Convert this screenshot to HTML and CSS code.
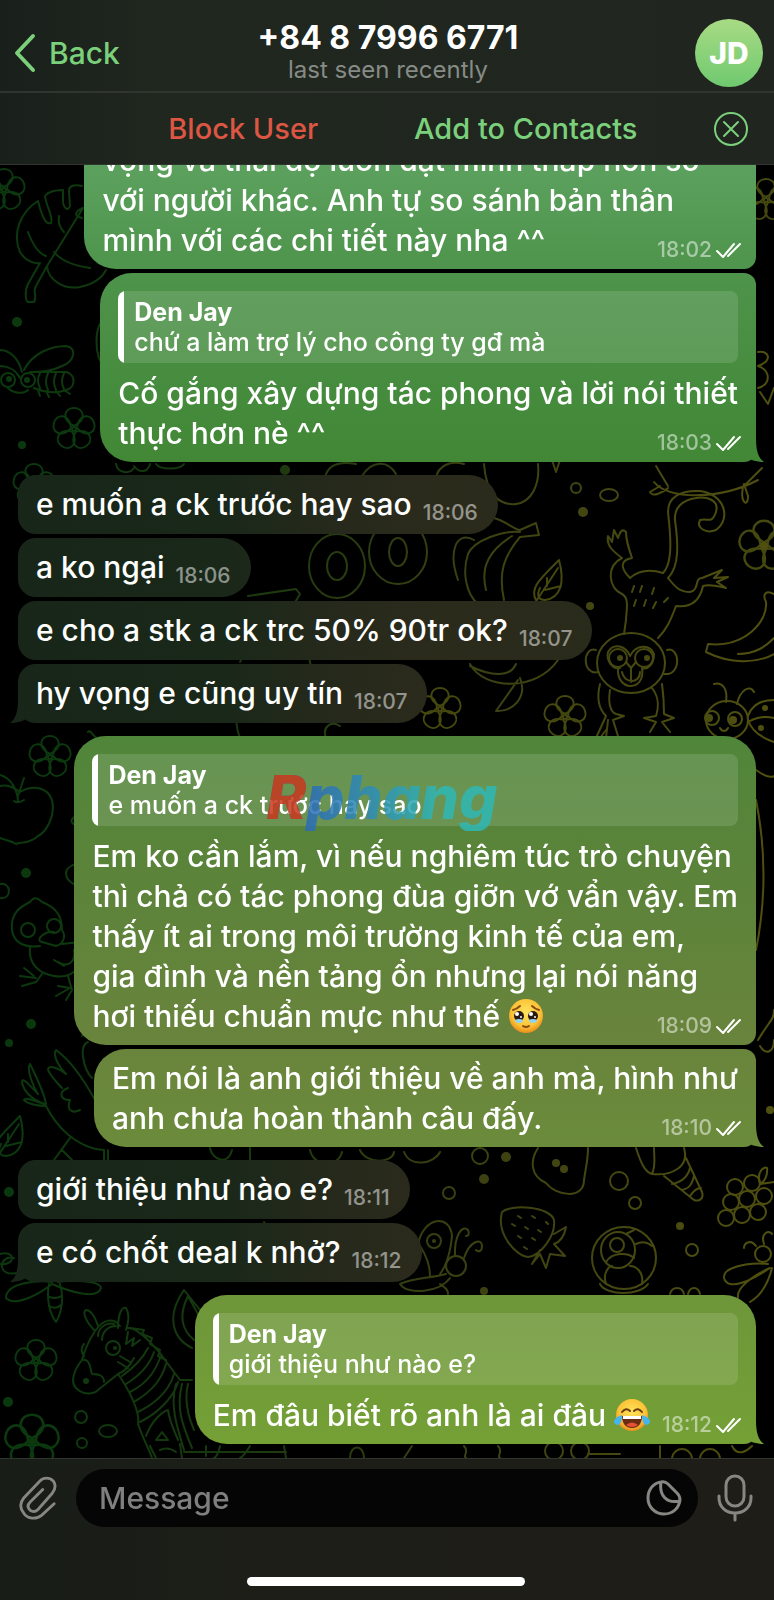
FILE: index.html
```
<!DOCTYPE html>
<html lang="vi">
<head>
  <meta charset="UTF-8" />
  <meta name="viewport" content="width=device-width, initial-scale=1.0"/>
  <title>+84 8 7996 6771</title>
  <link rel="stylesheet" href="styles.css">
</head>
<body>

  <!-- Wallpaper -->
  <svg class="wallpaper" viewBox="0 0 774 1600" preserveAspectRatio="xMidYMid slice" aria-hidden="true">
    <defs>
      <linearGradient id="ink" gradientUnits="userSpaceOnUse" x1="0" y1="0" x2="774" y2="0">
        <stop offset="0" stop-color="#0a380e"/>
        <stop offset="0.3" stop-color="#18380e"/>
        <stop offset="0.6" stop-color="#3b4012"/>
        <stop offset="1" stop-color="#50500f"/>
      </linearGradient>
      <path id="petal" d="M0-3C-14-10-9-21 0-21S14-10 0-3Z"/>
      <g id="flower">
        <use href="#petal"/>
        <use href="#petal" transform="rotate(72)"/>
        <use href="#petal" transform="rotate(144)"/>
        <use href="#petal" transform="rotate(216)"/>
        <use href="#petal" transform="rotate(288)"/>
        <circle r="2"/>
      </g>
      <g id="leaf">
        <path d="M-13 16C-20 4-8-6 10-24 16-2 12 14-4 16-10 16-13 12-9 4M-16 22L9-16M-4 6L12 2M-2 2V-6"/>
      </g>
      <g id="check" fill="none" stroke="#fff" stroke-width="2" stroke-linecap="round" stroke-linejoin="round">
        <path d="M2 10L8 16 19 3M13 15L25 3"/>
      </g>
    </defs>

    <g fill="none" stroke="url(#ink)" stroke-width="2" stroke-linecap="round" stroke-linejoin="round">
      <g stroke="#0c390f">
        <use href="#flower" x="4" y="190"/>
        <use href="#flower" x="74" y="429"/>
        <use href="#flower" x="50" y="757"/>
        <use href="#flower" x="36" y="1361"/>
        <use href="#flower" transform="translate(32 1442) scale(1.3)"/>
        <use href="#flower" x="34" y="485"/>
        <use href="#leaf" x="10" y="1140"/>
      </g>
      <g stroke="#45480f">
        <use href="#flower" x="440" y="709"/>
        <use href="#flower" x="565" y="717"/>
        <use href="#flower" transform="translate(764 546) scale(1.2)"/>
        <use href="#flower" x="766" y="200"/>
        <use href="#leaf" x="549" y="584"/>
      </g>

      <!-- monstera leaf, bee -->
      <path d="M82 186C74 184 68 186 69 192L70 206C68 212 63 208 63 200V190C54 190 48 192 45 196 46 206 54 218 51 223 44 226 40 208 38 201 20 212 12 234 20 252 26 262 36 264 40 263L28 284C24 292 26 302 28 302H34C38 296 32 292 36 286L47 266 83 208M47 266C48 280 64 290 80 287 94 284 102 278 106 270M28 232C34 248 40 254 46 256M54 252C62 262 76 266 90 268M59 216C58 222 60 228 64 232M83 208C74 212 74 216 82 218"/>
      <path d="M24 370C32 354 50 346 66 346 78 348 74 362 62 366 50 372 40 372 34 372M22 372C18 356 8 350 0 350M20 378C16 370 8 366 0 366M30 372H66C76 374 76 388 66 390 56 394 44 392 34 388M8 388C14 394 24 394 28 390M40 373Q36 380 40 388M48 373Q44 382 48 390M56 373Q52 382 56 390M64 373Q60 382 64 389M38 390L40 396M46 391L49 397M56 391L60 396M64 390L70 394"/>
      <circle cx="8" cy="380" r="7"/><circle cx="28" cy="380" r="7"/>
      <path d="M104 320C94 326 94 356 104 366M116 464C118 474 130 474 134 468M134 466C140 474 148 472 150 464M156 464C160 470 180 470 184 464"/>

      <!-- lettering and fruit in the middle -->
      <path d="M248 596L296 589 300 594 268 648 308 652 312 672M248 618L270 612 240 662"/>
      <ellipse cx="337" cy="566" rx="28" ry="32"/><ellipse cx="337" cy="566" rx="10" ry="14"/>
      <ellipse cx="398" cy="552" rx="29" ry="32"/><ellipse cx="398" cy="552" rx="9" ry="14"/>
      <path d="M325 478C328 462 344 462 356 464M362 476C372 460 388 460 396 474M436 478C438 466 450 460 464 464M484 464C486 492 498 506 516 504 532 502 540 484 538 464M552 460L556 472 560 460"/>
      <path d="M494 518C508 522 514 530 520 530L536 523 539 535 520 537C504 556 498 572 504 600M520 532C504 530 474 540 468 554 462 572 466 594 478 604M512 536C490 550 480 566 486 590M474 540C456 530 448 552 458 580M470 664C484 690 536 692 558 660M470 666C490 676 510 678 516 664M520 678C528 698 512 712 496 711L518 680"/>

      <!-- monkey -->
      <path d="M663 573C674 562 670 530 668 512 668 496 682 490 700 491 724 494 732 518 716 530 706 534 696 528 700 520 708 518 712 524 716 512 720 500 706 496 696 498 682 500 674 508 675 520 678 542 680 566 668 578"/>
      <path d="M663 573C650 569 638 571 630 578 620 568 620 560 632 558 628 546 626 540 626 532 622 528 620 532 618 538L614 530 612 542 608 536C606 546 614 552 622 558 606 566 608 588 622 594 630 598 626 612 626 620L624 634M668 578C676 588 680 592 690 592 700 590 694 578 702 578L722 570 714 578 728 577 717 582 726 588C718 586 710 584 703 586 700 600 692 608 676 606 670 622 666 630 658 638M634 586L632 592M642 586L640 592M654 588L652 594M636 600L634 606M646 600L644 606M656 602L653 608M668 598L664 602"/>
      <ellipse cx="631" cy="663" rx="34" ry="30"/>
      <path d="M596 650C582 646 582 676 598 672M667 650C680 646 682 676 664 674M620 668C612 670 606 660 608 652 614 642 626 646 630 656 636 644 650 644 654 654 654 664 648 670 642 668 646 692 616 692 618 668M626 662L631 668 636 662M631 668V682M622 672C624 684 640 684 640 672"/>
      <circle cx="618" cy="658" r="9"/><circle cx="644" cy="658" r="9"/>
      <path d="M600 684C596 700 600 710 606 716L596 738M610 690C608 702 610 712 616 714L624 716 613 720 618 736M608 720L606 738M652 688C660 698 658 710 656 716L644 718 656 722 650 732M662 684C664 698 664 708 664 714L674 718 662 722 670 732"/>
      <path d="M654 482C668 500 720 500 758 480M660 486L650 492C652 498 664 492 668 488M744 484C738 500 748 510 748 496L744 484M656 466L668 486M762 468L744 486"/>
      <circle cx="576" cy="488" r="5"/><ellipse cx="609" cy="495" rx="9" ry="6"/>
      <path d="M774 594C766 590 762 594 766 602 768 622 744 648 708 644L706 652C730 664 756 664 774 654M738 654C756 654 766 646 774 638"/>

      <!-- ladybird -->
      <ellipse cx="727" cy="720" rx="21" ry="19"/><circle cx="712" cy="718" r="7"/><circle cx="735" cy="719" r="7"/>
      <path d="M726 702C728 688 722 682 714 684M737 704C740 690 750 684 754 692M748 716C752 704 762 700 774 700M748 722C758 716 766 716 774 718M748 720C752 732 762 738 774 742M720 728C722 732 726 732 728 728"/>

      <!-- apple, duckling -->
      <path d="M0 786C8 784 14 788 20 792 34 784 48 788 52 800 56 816 46 832 38 836 30 844 20 842 16 844 10 840 4 840 0 838M18 802C18 792 12 778 0 775M18 796L24 778M14 801Q18 804 24 800"/>
      <path d="M78 816C70 818 68 824 80 826M78 864C62 866 62 880 78 886M0 884C12 882 12 900 0 898"/>
      <path d="M12 930C10 912 22 906 30 902 34 896 38 898 42 902 58 908 62 918 62 930 66 936 64 944 56 946L42 942C34 940 46 930 54 932M12 930C14 944 26 948 40 946M62 944L80 942M30 948C28 964 40 974 54 976 66 978 74 974 80 966M74 950C76 962 68 968 58 962M54 960L64 966M42 974L36 982 22 986M36 978L20 976M34 976L24 968M68 976L72 990 66 1000M70 988L56 996M70 988L58 986"/>
      <circle cx="28" cy="930" r="7"/><circle cx="54" cy="926" r="7"/>

      <!-- bird -->
      <path d="M95 1100C84 1080 70 1060 56 1050 52 1056 60 1068 66 1074 58 1068 48 1064 48 1070 52 1078 58 1084 62 1088M46 1104C44 1092 34 1072 30 1064 26 1070 34 1088 38 1094 30 1086 22 1076 22 1082 24 1094 34 1100 44 1104M46 1104C34 1102 26 1096 24 1100 28 1104 38 1106 46 1106 56 1126 76 1148 104 1150M68 1088C58 1092 60 1100 70 1100 66 1110 72 1114 80 1110M88 1042C78 1046 84 1070 92 1078M70 1138L54 1160M62 1150L72 1160M104 1150V1160M108 1150V1160M82 1036C84 1030 90 1030 92 1038"/>

      <!-- lower strip -->
      <path d="M210 1148C212 1160 228 1166 232 1150M250 1148V1162M310 1150C314 1168 338 1168 342 1152M360 1150C366 1164 392 1164 394 1152M404 1152C410 1168 434 1164 440 1152M264 1222L270 1232 278 1224 286 1232"/>
      <circle cx="480" cy="1156" r="8"/><circle cx="619" cy="1181" r="9"/><circle cx="449" cy="1193" r="6"/><circle cx="635" cy="1203" r="6"/><circle cx="692" cy="1250" r="6"/>
      <path d="M538 1148C530 1160 530 1176 546 1183 556 1196 584 1200 584 1180 586 1166 588 1160 588 1148"/>
      <path d="M636 1148C640 1160 644 1172 652 1174 670 1176 690 1168 684 1148M652 1174C656 1166 654 1156 654 1148M686 1158L702 1192C704 1198 700 1202 694 1200L664 1176M672 1184C682 1182 688 1176 690 1168M682 1190C690 1188 692 1184 694 1176M690 1196C694 1190 698 1188 701 1188"/>
      <path d="M502 1212C510 1204 550 1206 554 1220 556 1236 540 1256 528 1257 516 1256 496 1234 502 1212ZM554 1234L566 1227C564 1238 560 1242 554 1244L565 1256 550 1254 546 1268 540 1254 532 1264 540 1250M518 1216L521 1218M532 1216L535 1218M546 1222L548 1224M512 1224L515 1226M525 1227L528 1229M538 1230L541 1232M518 1236L521 1238M532 1238L535 1240M524 1247L527 1249"/>
      <ellipse cx="624" cy="1258" rx="32" ry="31"/><circle cx="617" cy="1245" r="7"/><ellipse cx="618" cy="1250" rx="17" ry="18"/>
      <path d="M606 1262C612 1252 628 1252 634 1258M606 1284C602 1272 610 1266 612 1266M642 1284C644 1272 636 1266 630 1266M636 1244C644 1240 650 1244 652 1246M626 1234L634 1230"/>
      <g>
        <circle cx="735" cy="1187" r="8"/><circle cx="752" cy="1183" r="8"/><circle cx="731" cy="1202" r="8"/><circle cx="747" cy="1199" r="8"/><circle cx="764" cy="1196" r="8"/><circle cx="726" cy="1218" r="8"/><circle cx="742" cy="1215" r="8"/><circle cx="758" cy="1212" r="8"/>
        <path d="M760 1184C756 1172 764 1166 767 1168 768 1176 764 1182 760 1184L774 1182"/>
      </g>
      <!-- butterfly, wasp -->
      <path d="M418 1244C424 1216 450 1214 452 1236 450 1256 446 1266 440 1274M420 1246C428 1258 430 1268 430 1276M446 1274C432 1278 412 1278 400 1284 408 1296 440 1292 450 1278M455 1256C454 1236 462 1224 468 1230 470 1234 468 1236 466 1236M464 1258C470 1240 482 1238 482 1246 482 1252 478 1252 476 1250M440 1284C446 1288 448 1290 448 1294"/>
      <circle cx="434" cy="1241" r="7"/><circle cx="456" cy="1266" r="10"/>
      <path d="M768 1264C746 1262 722 1268 724 1278 728 1292 752 1280 770 1268 752 1276 736 1288 738 1298M772 1268C768 1284 760 1296 750 1302M756 1246C750 1238 744 1244 744 1248M764 1244C760 1232 770 1230 772 1234"/>
      <circle cx="763" cy="1254" r="8"/>

      <!-- dragonfly, zebra -->
      <path d="M52 1282C40 1280 6 1282 6 1298 16 1308 42 1292 52 1284C70 1292 98 1300 101 1288 100 1280 70 1280 58 1282M49 1284C46 1300 50 1314 56 1322 62 1312 64 1296 60 1284M48 1296Q54 1300 62 1296M49 1306Q56 1310 61 1305M0 1254C16 1250 16 1266 0 1264M20 1272C-4 1280-2 1254 14 1258"/>
      <path d="M95 1331C86 1322 82 1312 86 1310 92 1310 96 1320 98 1326M118 1328C118 1314 122 1306 126 1308 130 1314 128 1324 126 1330M95 1331C104 1318 114 1318 120 1326M98 1336C98 1328 106 1322 114 1324M102 1340C102 1332 108 1326 116 1326M95 1331C88 1342 84 1352 82 1360 74 1370 70 1382 76 1388 84 1396 94 1394 98 1390L118 1374C128 1370 132 1362 134 1358M82 1360C90 1358 90 1368 92 1374 100 1374 104 1376 104 1382M84 1344C80 1348 82 1354 84 1356M118 1374C132 1394 140 1414 138 1424 144 1442 148 1446 152 1458M128 1328C140 1328 160 1352 168 1364L180 1380H192M130 1328L144 1330 142 1334 152 1338 150 1344 160 1350 158 1356 166 1360M128 1332L126 1344 134 1338 132 1346 140 1340M120 1356L130 1362M118 1362L128 1368"/>
      <path d="M122 1376C136 1366 144 1356 148 1348M126 1384C142 1374 150 1364 154 1352M130 1392C150 1382 156 1368 160 1358M134 1402C154 1390 162 1378 166 1364M138 1412C158 1402 170 1388 174 1374M140 1422C160 1412 174 1396 178 1382M146 1436C152 1420 162 1412 168 1410 170 1424 176 1434 178 1440M156 1440L162 1432 168 1440ZM176 1384C170 1404 176 1424 184 1450M182 1384C176 1408 182 1424 192 1448M188 1384C184 1400 188 1416 194 1430M160 1450Q168 1446 176 1452M150 1446L156 1458M180 1444L182 1458M184 1452H286M206 1446V1456M220 1446Q218 1456 214 1458M250 1446Q244 1456 240 1458M284 1446L286 1458"/>
      <circle cx="113" cy="1348" r="7"/>
      <path d="M200 1310L184 1290C166 1316 172 1338 192 1348M198 1314L188 1296C178 1316 182 1330 194 1340"/>
      <circle cx="81" cy="1417" r="6"/><ellipse cx="108" cy="1431" rx="9" ry="6"/><circle cx="82" cy="1443" r="5"/>
      <path d="M350 1458C350 1444 364 1444 364 1458M412 1446L404 1458M464 1446C470 1452 462 1456 466 1458M498 1446C504 1452 496 1456 500 1458M588 1454H620M660 1458V1446M672 1458C674 1446 690 1446 692 1458M700 1458C702 1446 718 1446 720 1458M732 1446C738 1458 748 1450 752 1446M600 1284C606 1296 640 1296 648 1284M670 1294C672 1286 682 1286 684 1294M688 1294C690 1286 698 1286 700 1294"/>
      <circle cx="554" cy="1451" r="9"/><circle cx="580" cy="1451" r="9"/>
      <path d="M758 352C768 350 774 360 758 366 770 370 772 384 758 388M760 392L768 404 774 388M756 770C770 780 774 776 774 776M756 800C766 850 766 900 756 950M758 1040C770 1020 774 1020 774 1010M760 1046C766 1056 774 1052 774 1040M106 738C94 744 92 728 88 732M240 738Q232 716 242 706M326 738C322 728 330 720 340 726M600 738L606 730"/>
    </g>

    <g fill="url(#ink)">
      <circle cx="17" cy="322" r="5"/><circle cx="22" cy="445" r="4"/><circle cx="285" cy="470" r="5"/><circle cx="583" cy="512" r="5"/><circle cx="590" cy="606" r="4"/>
      <circle cx="26" cy="873" r="5"/><circle cx="31" cy="1024" r="5"/><circle cx="9" cy="1043" r="4"/><circle cx="9" cy="1192" r="5"/><circle cx="8" cy="1402" r="5"/>
      <circle cx="506" cy="1157" r="5"/><circle cx="484" cy="1179" r="5"/><circle cx="680" cy="1226" r="4"/><circle cx="484" cy="1291" r="4"/><circle cx="770" cy="1110" r="4"/>
      <circle cx="620" cy="658" r="3"/><circle cx="647" cy="658" r="3"/><circle cx="709" cy="718" r="4"/><circle cx="733" cy="720" r="4"/><circle cx="765" cy="708" r="3"/><circle cx="761" cy="728" r="3"/>
      <circle cx="115" cy="1348" r="2"/><circle cx="86" cy="1381" r="3"/><circle cx="9" cy="379" r="3"/><circle cx="27" cy="380" r="3"/><circle cx="764" cy="546" r="4"/><circle cx="32" cy="1442" r="4"/>
      <circle cx="556" cy="1163" r="4"/><circle cx="564" cy="1169" r="4"/><circle cx="434" cy="1241" r="2"/>
    </g>
  </svg>

  <div class="app">

    <!-- Header -->
    <header class="header">
      <div class="topbar">
        <a class="back" href="#">
          <svg width="24" height="40" viewBox="0 0 24 40" aria-hidden="true"><path d="M20 3L4 20 20 37" fill="none" stroke="currentColor" stroke-width="4" stroke-linecap="round" stroke-linejoin="round"/></svg>
          Back
        </a>
        <div class="peer">
          <h1>+84 8 7996 6771</h1>
          <p>last seen recently</p>
        </div>
        <button class="avatar">JD</button>
      </div>
      <div class="actions">
        <button class="block">Block User</button>
        <button class="add">Add to Contacts</button>
        <button class="close" aria-label="Close">
          <svg width="36" height="36" viewBox="0 0 36 36" fill="none" stroke="currentColor" stroke-width="2" stroke-linecap="round"><circle cx="18" cy="18" r="16"/><path d="M11 11L25 25M25 11L11 25"/></svg>
        </button>
      </div>
    </header>

    <!-- Messages -->
    <main class="chat">
      <div class="msg out wide">
        vọng và thái độ luôn đặt mình thấp hơn so<br>
        với người khác. Anh tự so sánh bản thân<br>
        mình với các chi tiết này nha ^^
        <span class="meta">18:02 <svg width="27" height="19" viewBox="0 0 27 19"><use href="#check"/></svg></span>
      </div>

      <div class="msg out tail">
        <blockquote class="quote"><b>Den Jay</b><br>chứ a làm trợ lý cho công ty gđ mà</blockquote>
        Cố gắng xây dựng tác phong và lời nói thiết<br>
        thực hơn nè ^^
        <span class="meta">18:03 <svg width="27" height="19" viewBox="0 0 27 19"><use href="#check"/></svg></span>
      </div>

      <div class="msg in group">e muốn a ck trước hay sao <span class="meta">18:06</span></div>
      <div class="msg in">a ko ngại <span class="meta">18:06</span></div>
      <div class="msg in">e cho a stk a ck trc 50% 90tr ok? <span class="meta">18:07</span></div>
      <div class="msg in tail">hy vọng e cũng uy tín <span class="meta">18:07</span></div>

      <div class="msg out group">
        <blockquote class="quote">
          <b>Den Jay</b><br>e muốn a ck trước hay sao
          <span class="watermark"><i>R</i>phang</span>
        </blockquote>
        Em ko cần lắm, vì nếu nghiêm túc trò chuyện<br>
        thì chả có tác phong đùa giỡn vớ vẩn vậy. Em<br>
        thấy ít ai trong môi trường kinh tế của em,<br>
        gia đình và nền tảng ổn nhưng lại nói năng<br>
        hơi thiếu chuẩn mực như thế
        <svg class="emoji" viewBox="0 0 36 36" role="img" aria-label="🥹">
          <defs>
            <radialGradient id="face" cx="0.5" cy="0.4" r="0.6">
              <stop offset="0" stop-color="#ffe45c"/>
              <stop offset="0.7" stop-color="#fbc237"/>
              <stop offset="1" stop-color="#e88d1c"/>
            </radialGradient>
          </defs>
          <circle cx="18" cy="18" r="17" fill="url(#face)"/>
          <circle cx="11" cy="18" r="5" fill="#2b1a14"/><circle cx="25" cy="18" r="5" fill="#2b1a14"/>
          <circle cx="9" cy="16" r="2" fill="#fff"/><circle cx="23" cy="16" r="2" fill="#fff"/>
          <circle cx="13" cy="19" r="1" fill="#fff"/><circle cx="27" cy="19" r="1" fill="#fff"/>
          <path d="M7 22Q11 20 15 22 15 25 11 25T7 22ZM21 22Q25 20 29 22 29 25 25 25T21 22Z" fill="#8fd3f5"/>
          <path d="M5 12Q9 11 12 8M24 8Q27 11 31 12M15 28Q18 30 21 28" fill="none" stroke="#8a4b14" stroke-width="2" stroke-linecap="round"/>
        </svg>
        <span class="meta">18:09 <svg width="27" height="19" viewBox="0 0 27 19"><use href="#check"/></svg></span>
      </div>

      <div class="msg out tail">
        Em nói là anh giới thiệu về anh mà, hình như<br>
        anh chưa hoàn thành câu đấy.
        <span class="meta">18:10 <svg width="27" height="19" viewBox="0 0 27 19"><use href="#check"/></svg></span>
      </div>

      <div class="msg in group">giới thiệu như nào e? <span class="meta">18:11</span></div>
      <div class="msg in tail">e có chốt deal k nhở? <span class="meta">18:12</span></div>

      <div class="msg out tail group">
        <blockquote class="quote"><b>Den Jay</b><br>giới thiệu như nào e?</blockquote>
        Em đâu biết rõ anh là ai đâu
        <svg class="emoji" viewBox="0 0 36 36" role="img" aria-label="😂">
          <circle cx="18" cy="18" r="16" fill="url(#face)"/>
          <path d="M8 19H28C28 27 24 31 18 31S8 27 8 19Z" fill="#6b2d12"/>
          <path d="M9 19H27V22H9Z" fill="#fff"/>
          <path d="M12 28Q18 23 24 28 18 32 12 28Z" fill="#e8503a"/>
          <path d="M8 15Q12 10 16 14M20 14Q24 10 28 15" fill="none" stroke="#6b3a12" stroke-width="2" stroke-linecap="round"/>
          <path d="M8 18Q8 27 4 28 0 28 0 24 1 20 8 18ZM28 18Q28 27 32 28 36 28 36 24 35 20 28 18Z" fill="#45b5f0"/>
        </svg>
        <span class="meta">18:12 <svg width="27" height="19" viewBox="0 0 27 19"><use href="#check"/></svg></span>
      </div>
    </main>

    <!-- Input -->
    <footer class="footer">
      <form class="composer">
        <button type="button" aria-label="Attach">
          <svg width="38" height="44" viewBox="0 0 40 46" fill="none" stroke="currentColor" stroke-width="3" stroke-linecap="round"><path d="M37 29L24 41C18 46 9 45 5 39 1 34 1 28 5 23L22 5C26 1 32 1 36 5 39 9 38 14 35 18L20 35C17 38 13 38 11 35 9 33 9 30 12 27L25 14"/></svg>
        </button>
        <div class="field">
          <input type="text" placeholder="Message" aria-label="Message">
          <button type="button" aria-label="Stickers">
            <svg width="36" height="36" viewBox="0 0 36 36" fill="none" stroke="currentColor" stroke-width="3" stroke-linejoin="round"><path d="M15 2C7 3 2 10 2 18 2 27 9 34 18 34S33 28 34 20C34 17 33 15 31 13L22 4C20 2 18 1 15 2ZM15 2C13 15 20 24 34 21"/></svg>
          </button>
        </div>
        <button type="button" aria-label="Record voice message">
          <svg width="36" height="48" viewBox="0 0 36 48" fill="none" stroke="currentColor" stroke-width="3" stroke-linecap="round"><rect x="9" y="2" width="18" height="30" rx="9"/><path d="M2 22V24C2 33 9 39 18 39S34 33 34 24V22M18 39V46"/></svg>
        </button>
      </form>
      <div class="home"></div>
    </footer>
  </div>

</body>
</html>
```
FILE: styles.css
```
:root {
  --bar: linear-gradient(90deg, #191f1a, #20271f 20%, #20261f);
  --line: #30362f;
  --green: #7bd07c;
  --red: #dd5644;
  --muted: #868b86;
  --out: linear-gradient(180deg, #5ca15e 10%, #4d9249 18%, #418735 29%, #50863a 46%, #5d833a 56%, #69843c 65%, #6e963a 81%, #74a036 90%);
  --in: linear-gradient(90deg, #182619 0, #192819 28%, #25291b 42%, #2b2b1c 56%, #262a19);
}

* {
  box-sizing: border-box;
}

body {
  margin: 0;
  background: #000;
  color: #fff;
  font-family: Inter, 'Noto Sans', sans-serif;
  font-weight: 500;
}

h1, p, blockquote {
  margin: 0;
}

button {
  padding: 0;
  border: none;
  background: none;
  color: inherit;
  font: inherit;
  cursor: pointer;
}

svg {
  display: block;
}

.wallpaper {
  position: fixed;
  inset: 0;
  width: 100%;
  height: 100%;
}

.app {
  position: relative;
  display: flex;
  flex-direction: column;
  height: 100vh;
}

/* Header */
.header {
  background: var(--bar);
  border-bottom: 1px solid var(--line);
}

.topbar {
  display: grid;
  grid-template-columns: 1fr auto 1fr;
  align-items: center;
  padding: 19px 11px 4px 13px;
  border-bottom: 2px solid var(--line);
}

.back {
  display: flex;
  align-items: center;
  gap: 12px;
  color: var(--green);
  font-size: 30px;
  text-decoration: none;
}

.peer {
  text-align: center;
}

.peer h1 {
  font-size: 32px;
  line-height: 34px;
  font-weight: 700;
}

.peer p {
  color: var(--muted);
  font-size: 24px;
  line-height: 30px;
  font-weight: 400;
}

.avatar {
  justify-self: end;
  width: 68px;
  height: 68px;
  border-radius: 50%;
  background: linear-gradient(#a8db84, #6fc96f);
  font-size: 30px;
  font-weight: 800;
}

.actions {
  display: grid;
  grid-template-columns: 1fr 1fr 82px;
  align-items: center;
  height: 71px;
  padding: 0 25px 0 102px;
  font-size: 29px;
}

.block {
  color: var(--red);
}

.add, .close {
  color: var(--green);
}

.close {
  justify-self: end;
}

/* Messages */
.chat {
  flex: 1;
  min-height: 0;
  overflow: hidden;
  display: flex;
  flex-direction: column;
  justify-content: flex-end;
  gap: 4px;
  padding: 0 18px 14px;
}

.msg {
  position: relative;
  flex-shrink: 0;
  padding: 9px 18px;
  font-size: 30px;
  line-height: 40px;
  white-space: nowrap;
}

.out {
  align-self: flex-end;
  border-radius: 32px 12px 12px 32px;
  background: var(--out) fixed;
}

.in {
  align-self: flex-start;
  padding: 9px 20px 10px 18px;
  border-radius: 18px 30px 30px 18px;
  background: var(--in) fixed;
}

.wide {
  width: 91%;
}

.group {
  margin-top: 9px;
}

.out.group {
  border-top-right-radius: 32px;
}

.tail::after {
  content: "";
  position: absolute;
  bottom: 0;
  width: 20px;
  height: 24px;
}

.out.tail::after {
  right: -8px;
  background: var(--out) fixed;
  clip-path: path("M0 0H12C12 12 14 20 20 24 12 24 6 22 0 17Z");
}

.in.tail::after {
  left: -8px;
  background: var(--in) fixed;
  clip-path: path("M20 0H8C8 12 6 20 0 24 8 24 14 22 20 17Z");
}

.meta {
  float: right;
  display: flex;
  align-items: center;
  gap: 3px;
  margin: 11px -4px -11px 12px;
  color: rgba(255,255,255,0.5);
  font-size: 21px;
  line-height: 38px;
}

.in .meta {
  margin: 10px 0 -10px 11px;
}

.quote {
  position: relative;
  margin: 9px 0 10px;
  padding: 6px 10px 6px 16px;
  border-radius: 8px;
  background: linear-gradient(90deg, #fff 6px, rgba(255,255,255,0.12) 6px);
  font-size: 25px;
  line-height: 30px;
}

.quote b {
  font-weight: 700;
}

.watermark {
  position: absolute;
  left: 174px;
  top: 9px;
  color: transparent;
  background: linear-gradient(90deg, #2b6cb8 18%, #2f93b5 50%, #2fb8b5 75%);
  background-clip: text;
  font-size: 60px;
  line-height: 68px;
  font-style: italic;
  font-weight: 800;
  opacity: 0.85;
}

.watermark i {
  color: #c8371f;
}

.emoji {
  display: inline-block;
  width: 36px;
  height: 36px;
  vertical-align: -7px;
}

/* Input */
.footer {
  padding: 10px 21px 14px 19px;
  border-top: 1px solid var(--line);
  background: linear-gradient(90deg, #181d17, #1e1e18 40%, #1e1d17);
}

.composer {
  display: flex;
  align-items: center;
  gap: 19px;
  color: #868683;
}

.field {
  flex: 1;
  display: flex;
  align-items: center;
  padding: 0 16px 0 23px;
  border-radius: 29px;
  background: #050505;
}

.field input {
  flex: 1;
  min-width: 0;
  height: 58px;
  padding: 0;
  border: none;
  outline: none;
  background: transparent;
  color: #fff;
  font: inherit;
  font-size: 30px;
}

.field input::placeholder {
  color: #7f7f7f;
}

.home {
  width: 38%;
  height: 9px;
  margin: 50px auto 0;
  border-radius: 5px;
  background: #fff;
}
```
